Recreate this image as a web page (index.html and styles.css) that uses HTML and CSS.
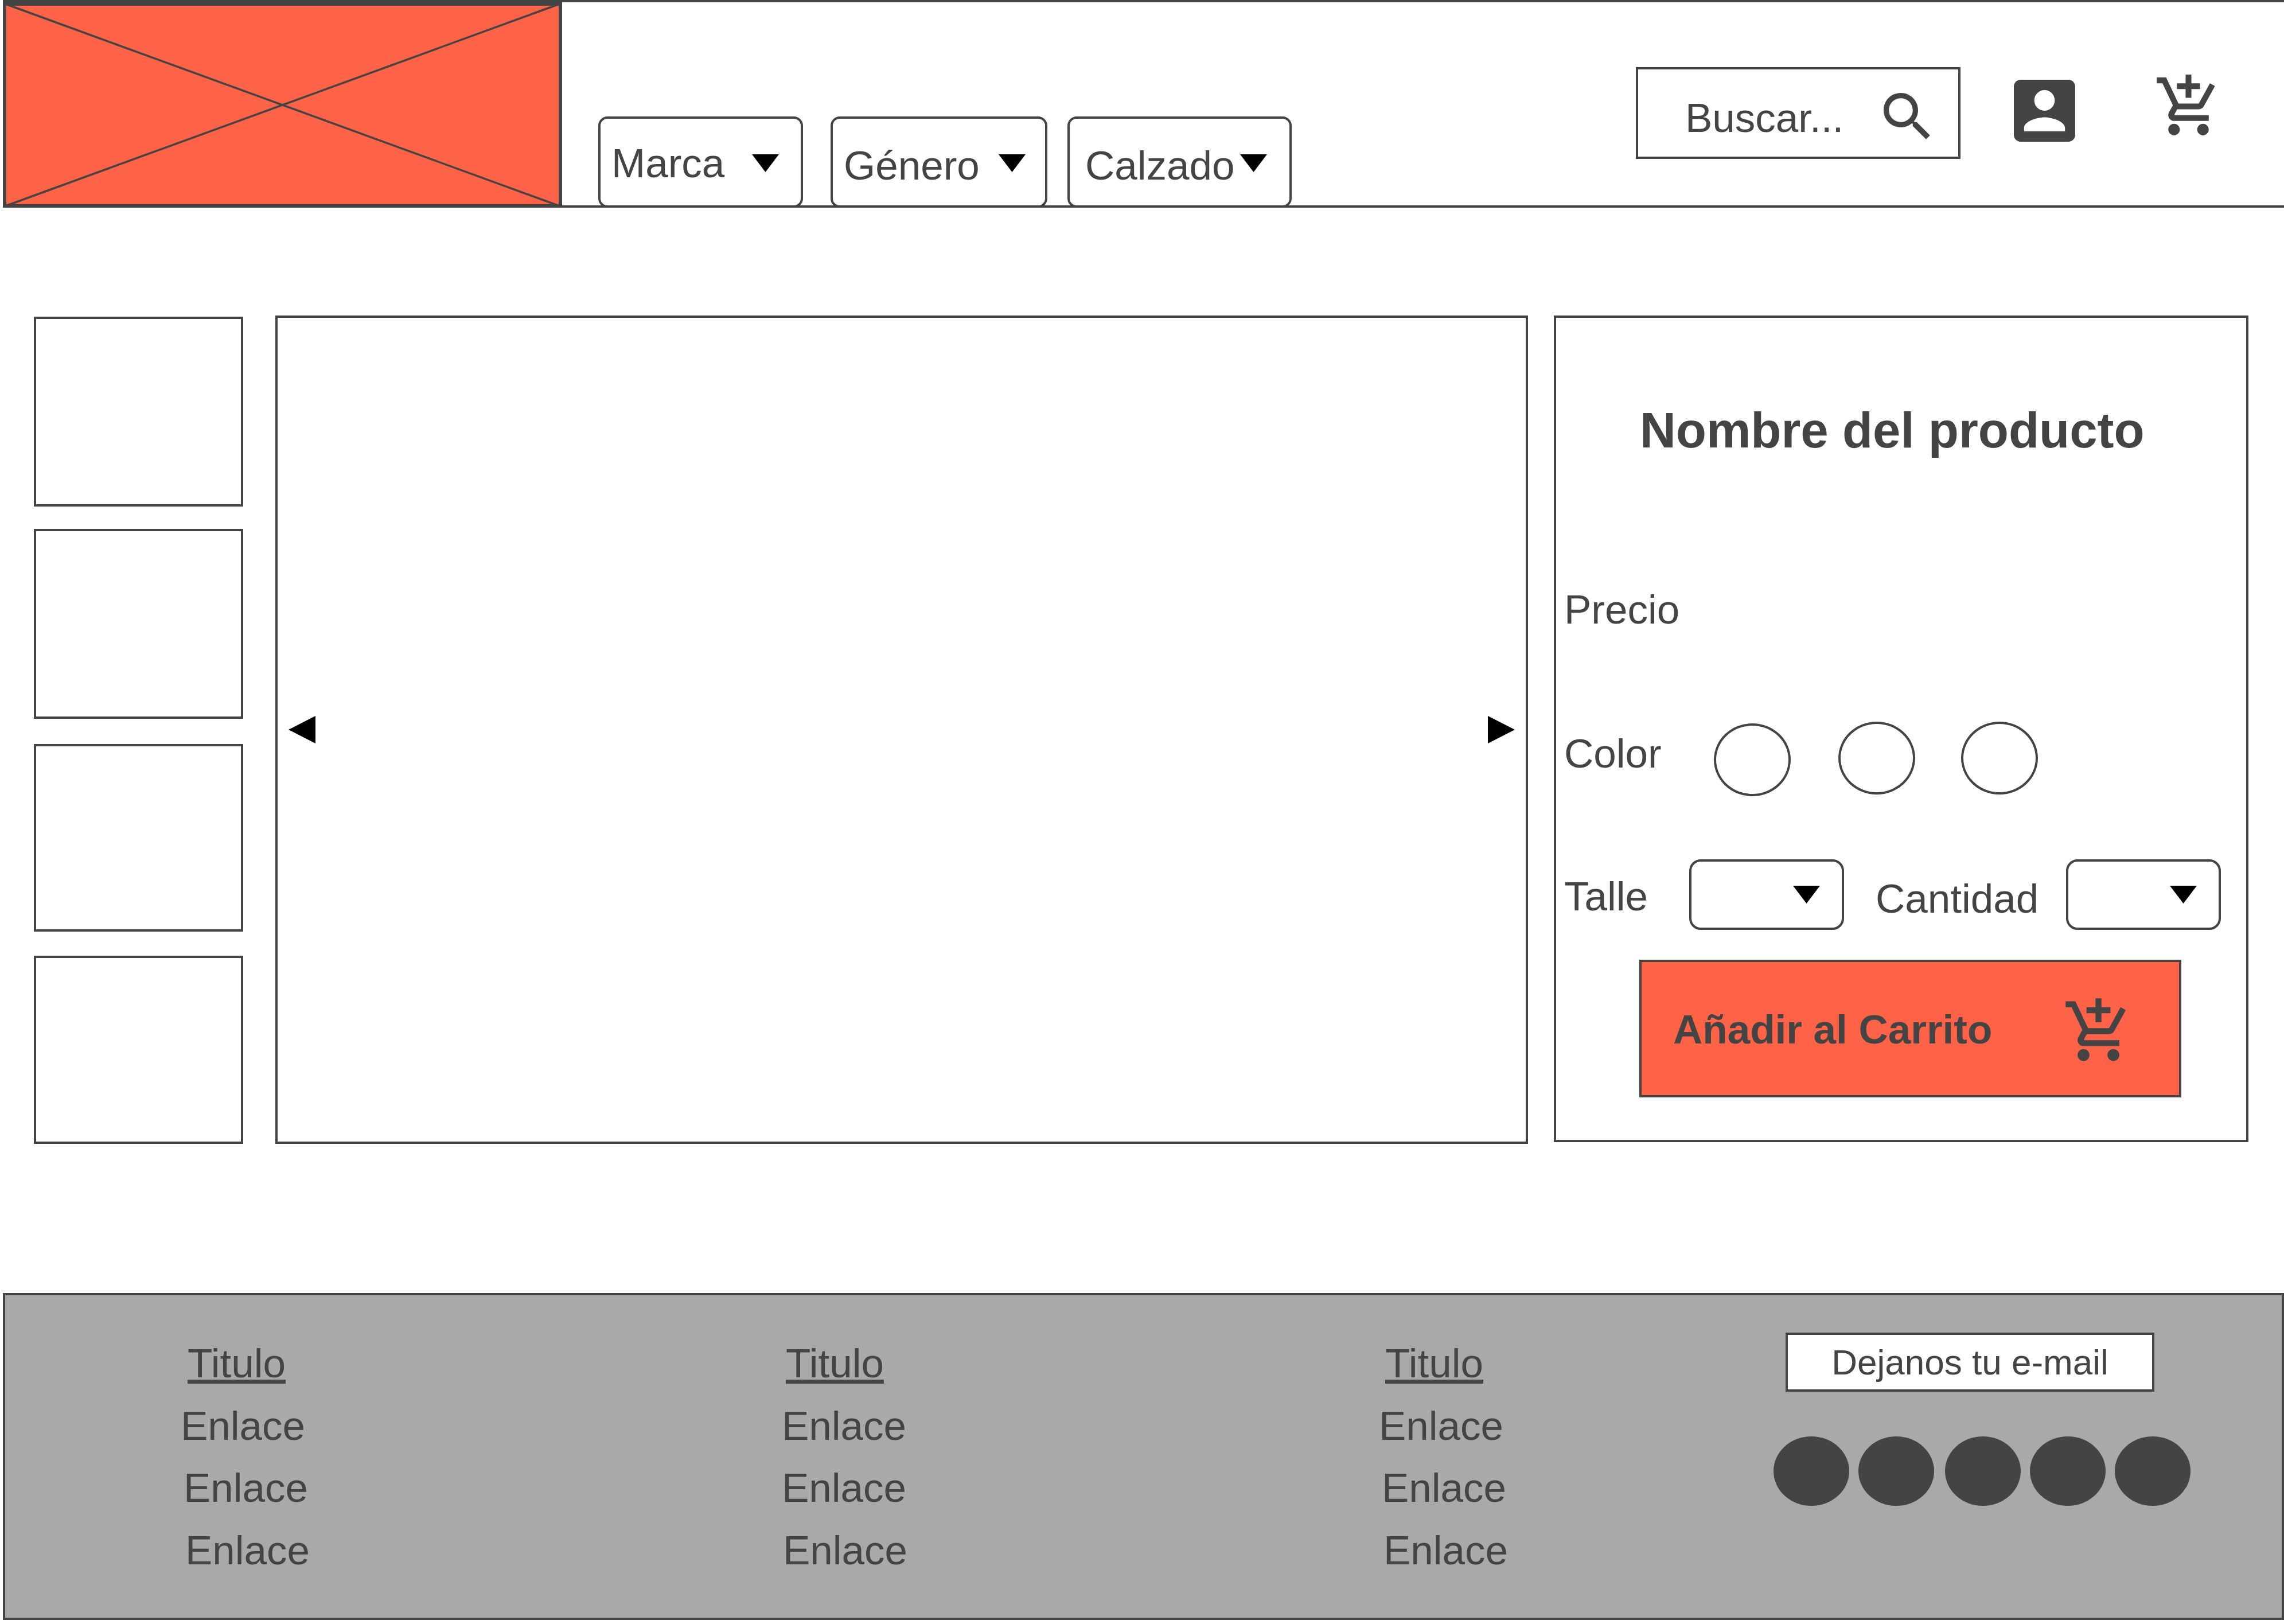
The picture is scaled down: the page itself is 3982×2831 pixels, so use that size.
FILE: index.html
```html
<!DOCTYPE html>
<html lang="es">
<head>
    <meta charset="UTF-8">
    <meta name="viewport" content="width=device-width, initial-scale=1.0">
    <title>Detalle del producto</title>
    <link rel="stylesheet" href="styles.css">
</head>
<body>
    <header class="header">
        <svg class="logo" viewBox="0 0 975 358" preserveAspectRatio="none">
            <rect x="3" y="3" width="969" height="352" fill="#ff6347" stroke="#444" stroke-width="6"/>
            <line x1="2" y1="2" x2="973" y2="356" stroke="#444" stroke-width="3.5"/>
            <line x1="973" y1="2" x2="2" y2="356" stroke="#444" stroke-width="3.5"/>
        </svg>

        <div class="drop drop-marca"><span class="text label-marca">Marca</span><i class="caret"></i></div>
        <div class="drop drop-genero"><span class="text label-low">Género</span><i class="caret"></i></div>
        <div class="drop drop-calzado"><span class="text label-low">Calzado</span><i class="caret"></i></div>

        <div class="search">
            <span class="text">Buscar...</span>
            <svg class="search-icon" viewBox="0 0 24 24"><path fill="#444" d="M15.5 14h-.79l-.28-.27C15.41 12.59 16 11.11 16 9.5 16 5.91 13.09 3 9.5 3S3 5.91 3 9.5 5.91 16 9.5 16c1.61 0 3.09-.59 4.23-1.57l.27.28v.79l5 4.99L20.49 19l-4.99-5zm-6 0C7.01 14 5 11.99 5 9.5S7.01 5 9.5 5 14 7.01 14 9.5 11.99 14 9.5 14z"/></svg>
        </div>
        <svg class="user-icon" viewBox="3 3 18 18" preserveAspectRatio="none"><path fill="#444" d="M3 5v14c0 1.1.89 2 2 2h14c1.1 0 2-.9 2-2V5c0-1.1-.9-2-2-2H5c-1.11 0-2 .9-2 2zm12 4c0 1.66-1.34 3-3 3s-3-1.34-3-3 1.34-3 3-3 3 1.34 3 3zm-9 8c0-2 4-3.1 6-3.1s6 1.1 6 3.1v1H6v-1z"/></svg>
        <svg class="cart-icon" viewBox="0 0 24 24"><path fill="#444" d="M11 9h2V6h3V4h-3V1h-2v3H8v2h3v3zm-4 9c-1.1 0-1.99.9-1.99 2S5.9 22 7 22s2-.9 2-2-.9-2-2-2zm10 0c-1.1 0-1.99.9-1.99 2s.89 2 1.99 2 2-.9 2-2-.9-2-2-2zm-9.83-3.25l.03-.12.9-1.63h7.45c.75 0 1.41-.41 1.75-1.03l3.86-7.01L19.42 4h-.01l-1.1 2-2.76 5H8.53l-.13-.27L6.16 6l-.95-2-.94-2H1v2h2l3.6 7.59-1.35 2.45c-.16.28-.25.61-.25.96 0 1.1.9 2 2 2h12v-2H7.42c-.13 0-.25-.11-.25-.25z"/></svg>
    </header>

    <main class="main">
        <div class="thumbs">
            <div class="thumb"></div>
            <div class="thumb"></div>
            <div class="thumb thumb-third"></div>
            <div class="thumb thumb-last"></div>
        </div>

        <div class="gallery">
            <i class="arrow arrow-left"></i>
            <i class="arrow arrow-right"></i>
        </div>

        <section class="panel">
            <h1 class="title">Nombre del producto</h1>
            <div class="text price">Precio</div>

            <div class="color-row">
                <span class="text color-label">Color</span>
                <div class="swatch swatch-a"></div>
                <div class="swatch swatch-b"></div>
                <div class="swatch swatch-c"></div>
            </div>

            <div class="option-row">
                <span class="text size-label">Talle</span>
                <div class="select select-size"><i class="caret"></i></div>
                <span class="text qty-label">Cantidad</span>
                <div class="select select-qty"><i class="caret"></i></div>
            </div>

            <div class="add-btn">
                <span class="add-text">Añadir al Carrito</span>
                <svg class="add-icon" viewBox="0 0 24 24"><path fill="#444" d="M11 9h2V6h3V4h-3V1h-2v3H8v2h3v3zm-4 9c-1.1 0-1.99.9-1.99 2S5.9 22 7 22s2-.9 2-2-.9-2-2-2zm10 0c-1.1 0-1.99.9-1.99 2s.89 2 1.99 2 2-.9 2-2-.9-2-2-2zm-9.83-3.25l.03-.12.9-1.63h7.45c.75 0 1.41-.41 1.75-1.03l3.86-7.01L19.42 4h-.01l-1.1 2-2.76 5H8.53l-.13-.27L6.16 6l-.95-2-.94-2H1v2h2l3.6 7.59-1.35 2.45c-.16.28-.25.61-.25.96 0 1.1.9 2 2 2h12v-2H7.42c-.13 0-.25-.11-.25-.25z"/></svg>
            </div>
        </section>
    </main>

    <footer class="footer">
        <div class="foot-col">
            <div class="text foot-title in-12">Titulo</div>
            <div class="text">Enlace</div>
            <div class="text in-5">Enlace</div>
            <div class="text in-8">Enlace</div>
        </div>
        <div class="foot-col">
            <div class="text foot-title in-7">Titulo</div>
            <div class="text">Enlace</div>
            <div class="text">Enlace</div>
            <div class="text in-2">Enlace</div>
        </div>
        <div class="foot-col">
            <div class="text foot-title in-11">Titulo</div>
            <div class="text">Enlace</div>
            <div class="text in-5">Enlace</div>
            <div class="text in-8">Enlace</div>
        </div>
        <div class="foot-side">
            <div class="email">Dejanos tu e-mail</div>
            <div class="dots">
                <div class="dot"></div>
                <div class="dot"></div>
                <div class="dot"></div>
                <div class="dot"></div>
                <div class="dot"></div>
            </div>
        </div>
    </footer>
</body>
</html>
```

FILE: styles.css
```css
* {
    box-sizing: border-box;
}

body {
    margin: 0;
    width: 3982px;
    background-color: #fff;
    color: #444;
    font-family: "Liberation Sans", Arial, sans-serif;
}

.text {
    font-size: 71px;
    line-height: 80px;
}

/* header */
.header {
    display: flex;
    align-items: flex-start;
    height: 362px;
    margin-left: 5px;
    border-top: 4px solid #444;
    border-bottom: 4px solid #444;
}

.logo {
    flex: none;
    width: 975px;
    height: 358px;
}

.drop {
    flex: none;
    display: flex;
    justify-content: space-between;
    align-items: flex-start;
    align-self: flex-end;
    height: 159px;
    margin-bottom: -4px;
    background-color: #fff;
    border: 4px solid #444;
    border-radius: 16px;
}

.drop-marca {
    width: 357px;
    margin-left: 63px;
    padding: 0 38px 0 19px;
}

.drop-genero {
    width: 378px;
    margin-left: 48px;
    padding: 0 34px 0 19px;
}

.drop-calzado {
    width: 391px;
    margin-left: 35px;
    padding: 0 39px 0 27px;
}

.label-marca {
    margin-top: 38px;
}

.label-low {
    margin-top: 42px;
}

.caret {
    flex: none;
    width: 47px;
    height: 31px;
    margin-top: 62px;
    background-color: #000;
    clip-path: polygon(0 0, 100% 0, 50% 100%);
}

.search {
    flex: none;
    display: flex;
    align-items: flex-start;
    width: 566px;
    height: 160px;
    margin: 113px 0 0 600px;
    padding-left: 82px;
    border: 4px solid #444;
}

.search .text {
    margin-top: 45px;
}

.search-icon {
    flex: none;
    width: 111px;
    height: 111px;
    margin: 27px 0 0 56px;
}

.user-icon {
    flex: none;
    width: 107px;
    height: 108px;
    margin: 135px 0 0 93px;
}

.cart-icon {
    flex: none;
    width: 121px;
    height: 121px;
    margin: 121px 0 0 137px;
}

/* product */
.main {
    display: flex;
    align-items: flex-start;
    padding: 188px 0 0 59px;
    margin-bottom: 260px;
}

.thumbs {
    flex: none;
    display: flex;
    flex-direction: column;
    gap: 39px;
    width: 365px;
    margin-top: 2px;
}

.thumb {
    height: 331px;
    border: 4px solid #444;
}

.thumb-third {
    height: 327px;
    margin-top: 5px;
}

.thumb-last {
    height: 328px;
    margin-top: 3px;
}

.gallery {
    flex: none;
    display: flex;
    justify-content: space-between;
    align-items: center;
    width: 2184px;
    height: 1444px;
    margin-left: 56px;
    padding: 0 19px;
    border: 4px solid #444;
}

.arrow {
    width: 47px;
    height: 48px;
    background-color: #000;
}

.arrow-left {
    clip-path: polygon(100% 0, 100% 100%, 0 50%);
}

.arrow-right {
    clip-path: polygon(0 0, 100% 50%, 0 100%);
}

.panel {
    flex: none;
    width: 1211px;
    height: 1441px;
    margin-left: 45px;
    border: 4px solid #444;
}

.title {
    margin: 146px 0 0 146px;
    font-size: 87px;
    line-height: 100px;
    font-weight: bold;
}

.price {
    margin: 223px 0 0 14px;
}

.color-row {
    display: flex;
    align-items: flex-start;
    margin-top: 155px;
    padding-left: 14px;
}

.color-label {
    width: 261px;
    margin-top: 16px;
}

.swatch {
    width: 134px;
    height: 127px;
    border: 4px solid #444;
    border-radius: 50%;
}

.swatch-a {
    margin-top: 3px;
}

.swatch-b {
    margin-left: 83px;
}

.swatch-c {
    margin-left: 80px;
}

.option-row {
    display: flex;
    align-items: flex-start;
    margin-top: 110px;
    padding-left: 14px;
}

.size-label {
    width: 218px;
    margin-top: 25px;
}

.qty-label {
    width: 332px;
    margin: 29px 0 0 55px;
}

.select {
    display: flex;
    justify-content: flex-end;
    width: 270px;
    height: 123px;
    padding-right: 38px;
    border: 4px solid #444;
    border-radius: 20px;
}

.select .caret {
    margin-top: 42px;
}

.add-btn {
    display: flex;
    justify-content: space-between;
    align-items: flex-start;
    width: 945px;
    height: 240px;
    margin: 52px 0 0 145px;
    padding: 0 78px 0 55px;
    background-color: #ff6347;
    border: 4px solid #444;
}

.add-text {
    margin-top: 78px;
    font-size: 71px;
    line-height: 80px;
    font-weight: bold;
}

.add-icon {
    flex: none;
    width: 125px;
    height: 125px;
    margin-top: 58px;
}

/* footer */
.footer {
    display: grid;
    grid-template-columns: 1048px 1041px 688px auto;
    width: 3977px;
    height: 570px;
    margin-left: 5px;
    padding-left: 306px;
    background-color: #a9a9a9;
    border: 4px solid #444;
}

.foot-col {
    display: flex;
    flex-direction: column;
    gap: 28.5px;
    padding-top: 79px;
}

.foot-title {
    text-decoration: underline;
}

.in-2 {
    padding-left: 2px;
}

.in-5 {
    padding-left: 5px;
}

.in-7 {
    padding-left: 7px;
}

.in-8 {
    padding-left: 8px;
}

.in-11 {
    padding-left: 11px;
}

.in-12 {
    padding-left: 12px;
}

.email {
    display: flex;
    justify-content: center;
    align-items: center;
    width: 643px;
    height: 103px;
    margin: 65px 0 0 21px;
    background-color: #fff;
    border: 4px solid #444;
    font-size: 62px;
}

.dots {
    display: flex;
    gap: 15px;
    margin-top: 78px;
}

.dot {
    width: 132px;
    height: 121px;
    background-color: #444;
    border-radius: 50%;
}

.dot:nth-child(2) {
    margin-left: 1px;
}

.dot:nth-child(3) {
    margin-left: 4px;
}

.dot:nth-child(4),
.dot:nth-child(5) {
    margin-left: 1px;
}
```
